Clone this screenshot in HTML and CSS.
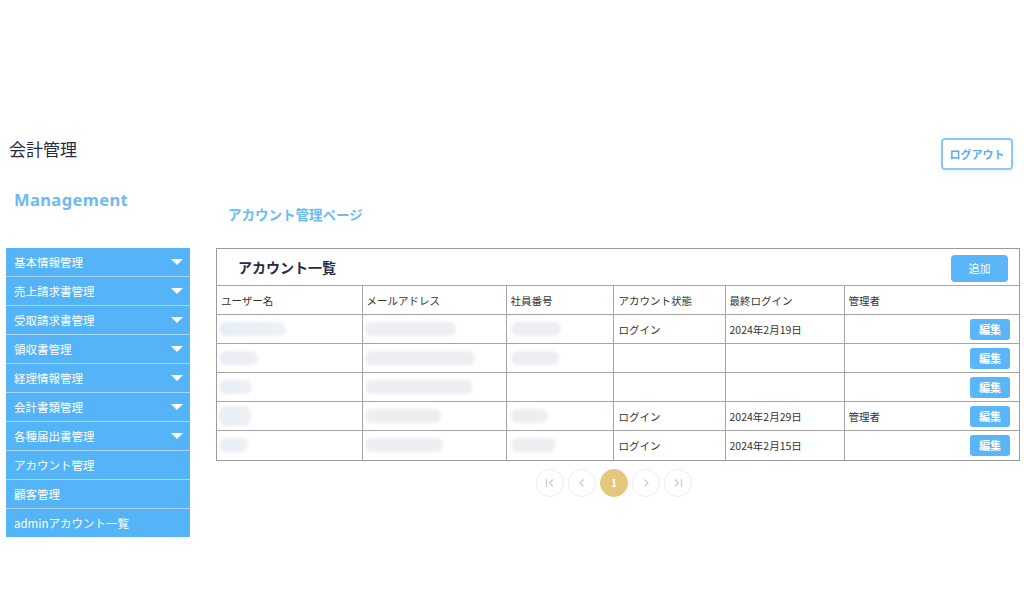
FILE: index.html
```html
<!DOCTYPE html>
<html lang="ja">
<head>
<meta charset="utf-8">
<title>会計管理</title>
<link rel="stylesheet" href="styles.css">
</head>
<body>
<header class="top-bar">
  <h1 class="app-title">会計管理</h1>
  <button class="logout-btn">ログアウト</button>
</header>
<div class="layout">
  <aside class="sidebar">
    <div class="brand">Management</div>
    <nav class="nav">
      <div class="nav-item"><span>基本情報管理</span><i class="caret"></i></div>
      <div class="nav-item"><span>売上請求書管理</span><i class="caret"></i></div>
      <div class="nav-item"><span>受取請求書管理</span><i class="caret"></i></div>
      <div class="nav-item"><span>領収書管理</span><i class="caret"></i></div>
      <div class="nav-item"><span>経理情報管理</span><i class="caret"></i></div>
      <div class="nav-item"><span>会計書類管理</span><i class="caret"></i></div>
      <div class="nav-item"><span>各種届出書管理</span><i class="caret"></i></div>
      <div class="nav-item"><span>アカウント管理</span></div>
      <div class="nav-item"><span>顧客管理</span></div>
      <div class="nav-item"><span>adminアカウント一覧</span></div>
    </nav>
  </aside>
  <main class="main">
    <div class="page-title">アカウント管理ページ</div>
    <section class="card">
      <div class="card-head">
        <h2 class="card-title">アカウント一覧</h2>
        <button class="btn-add">追加</button>
      </div>
      <table class="accounts">
        <colgroup>
          <col class="c1"><col class="c2"><col class="c3"><col class="c4"><col class="c5"><col class="c6">
        </colgroup>
        <thead>
          <tr><th>ユーザー名</th><th>メールアドレス</th><th>社員番号</th><th>アカウント状態</th><th>最終ログイン</th><th>管理者</th></tr>
        </thead>
        <tbody>
          <tr>
            <td><span class="blob tint" style="width:67px"></span></td>
            <td><span class="blob" style="width:91px"></span></td>
            <td><span class="blob" style="width:50px"></span></td>
            <td>ログイン</td><td>2024年2月19日</td>
            <td><div class="last"><span></span><button class="btn-edit">編集</button></div></td>
          </tr>
          <tr>
            <td><span class="blob tint" style="width:39px"></span></td>
            <td><span class="blob" style="width:110px"></span></td>
            <td><span class="blob" style="width:48px"></span></td>
            <td></td><td></td>
            <td><div class="last"><span></span><button class="btn-edit">編集</button></div></td>
          </tr>
          <tr>
            <td><span class="blob tint" style="width:33px"></span></td>
            <td><span class="blob" style="width:108px"></span></td>
            <td></td>
            <td></td><td></td>
            <td><div class="last"><span></span><button class="btn-edit">編集</button></div></td>
          </tr>
          <tr>
            <td><span class="blob tint tall" style="width:32px"></span></td>
            <td><span class="blob" style="width:76px"></span></td>
            <td><span class="blob" style="width:37px"></span></td>
            <td>ログイン</td><td>2024年2月29日</td>
            <td><div class="last"><span>管理者</span><button class="btn-edit">編集</button></div></td>
          </tr>
          <tr>
            <td><span class="blob tint" style="width:29px"></span></td>
            <td><span class="blob" style="width:78px"></span></td>
            <td><span class="blob" style="width:45px"></span></td>
            <td>ログイン</td><td>2024年2月15日</td>
            <td><div class="last"><span></span><button class="btn-edit">編集</button></div></td>
          </tr>
        </tbody>
      </table>
    </section>
    <nav class="pager">
      <span class="pg">
        <svg width="12" height="12" viewBox="0 0 12 12"><path d="M2.5 2v8M9 2.5 5.5 6 9 9.5" fill="none" stroke="#c9c9c9" stroke-width="1.2"/></svg>
      </span>
      <span class="pg">
        <svg width="12" height="12" viewBox="0 0 12 12"><path d="M7.5 2.5 4 6l3.5 3.5" fill="none" stroke="#c9c9c9" stroke-width="1.2"/></svg>
      </span>
      <span class="pg active">1</span>
      <span class="pg">
        <svg width="12" height="12" viewBox="0 0 12 12"><path d="M4.5 2.5 8 6l-3.5 3.5" fill="none" stroke="#c9c9c9" stroke-width="1.2"/></svg>
      </span>
      <span class="pg">
        <svg width="12" height="12" viewBox="0 0 12 12"><path d="M3 2.5 6.5 6 3 9.5M9.5 2v8" fill="none" stroke="#c9c9c9" stroke-width="1.2"/></svg>
      </span>
    </nav>
  </main>
</div>
</body>
</html>
```

FILE: styles.css
```css
* { box-sizing: border-box; }
html, body { margin: 0; padding: 0; background: #fff; }
body {
  width: 1024px;
  height: 608px;
  overflow: hidden;
  font-family: "Noto Sans CJK JP", "Noto Sans", sans-serif;
  color: #333;
}
button { font-family: inherit; cursor: pointer; }

.top-bar {
  display: flex;
  justify-content: space-between;
  align-items: flex-start;
  padding: 138px 11px 0 9px;
  height: 180px;
}
.app-title {
  margin: -1px 0 0;
  font-size: 17px;
  font-weight: 400;
  line-height: 24px;
  color: #262a45;
}
.logout-btn {
  width: 72px;
  height: 32px;
  background: #fff;
  border: 2px solid #8cc8f6;
  border-radius: 4px;
  color: #5aaef0;
  font-size: 11px;
  font-weight: 700;
  padding: 0;
  box-shadow: 0 2px 6px rgba(140, 180, 220, 0.2);
}

.layout { display: flex; align-items: flex-start; }

.sidebar { width: 184px; margin-left: 6px; }
.brand {
  height: 68px;
  padding: 10px 0 0 8px;
  font-family: "Noto Sans", "Open Sans", sans-serif;
  font-size: 16.5px;
  font-weight: 700;
  line-height: 20px;
  letter-spacing: 0.4px;
  color: #6dbaf3;
}
.nav { display: flex; flex-direction: column; background: #55b3f8; }
.nav-item {
  display: flex;
  align-items: center;
  justify-content: space-between;
  height: 29px;
  padding: 0 7px 0 8px;
  border-top: 1px solid #a9d8fb;
  color: #fff;
  font-size: 11.5px;
}
.nav-item:first-child { border-top: none; height: 28px; }
.caret {
  width: 0; height: 0;
  border-left: 6px solid transparent;
  border-right: 6px solid transparent;
  border-top: 6px solid #fff;
}

.main { width: 804px; margin-left: 26px; }
.page-title {
  height: 68px;
  padding: 25px 0 0 12px;
  font-size: 13.5px;
  font-weight: 700;
  line-height: 18px;
  color: #6dbaf3;
}

.card { border: 1px solid #9a9a9a; }
.card-head {
  display: flex;
  justify-content: space-between;
  align-items: center;
  height: 36px;
  padding: 0 11px 0 21px;
}
.card-title {
  margin: 0;
  font-size: 14px;
  font-weight: 700;
  color: #262a45;
}
.btn-add {
  width: 57px;
  height: 27px;
  margin-top: 2px;
  border: none;
  border-radius: 4px;
  background: #5ab6f8;
  color: #fff;
  font-size: 11px;
  padding: 0;
}

.accounts {
  width: 100%;
  border-collapse: collapse;
  table-layout: fixed;
  font-size: 10.5px;
  color: #333;
}
.c1 { width: 145px; } .c2 { width: 144px; } .c3 { width: 107px; }
.c4 { width: 112px; } .c5 { width: 119px; } .c6 { width: auto; }
.accounts th, .accounts td {
  height: 29px;
  padding: 0 4px;
  border: 1px solid #a5a5a5;
  text-align: left;
  font-weight: 400;
  vertical-align: middle;
  white-space: nowrap;
}
.accounts tr > :first-child { border-left: none; }
.accounts tr > :last-child { border-right: none; }
.accounts tbody tr:last-child td { border-bottom: none; }
.accounts td:nth-child(1) { padding-left: 2px; }
.accounts td:nth-child(2) { padding-left: 2px; }
.accounts td:nth-child(4), .accounts th:nth-child(4) { padding-left: 5px; }

.blob {
  display: block;
  height: 14px;
  border-radius: 7px;
  background: #eceef1;
  filter: blur(1.5px);
}
.blob.tint { background: linear-gradient(90deg, #e6eef8, #eef0f3); }
.blob.tall { height: 20px; }

.last { display: flex; justify-content: space-between; align-items: center; padding-right: 5px; }
.btn-edit {
  width: 40px;
  height: 21px;
  border: none;
  border-radius: 3px;
  background: #5ab6f8;
  color: #fff;
  font-size: 11px;
  font-weight: 700;
  padding: 0;
}

.pager {
  display: flex;
  justify-content: center;
  gap: 4px;
  margin-top: 8px;
  padding-right: 8px;
}
.pg {
  width: 28px;
  height: 28px;
  border-radius: 50%;
  border: 1px solid #ececec;
  display: flex;
  align-items: center;
  justify-content: center;
  color: #fff;
  font-size: 10px;
  font-weight: 700;
}
.pg.active { background: #e4c67c; border-color: #e4c67c; }
```
